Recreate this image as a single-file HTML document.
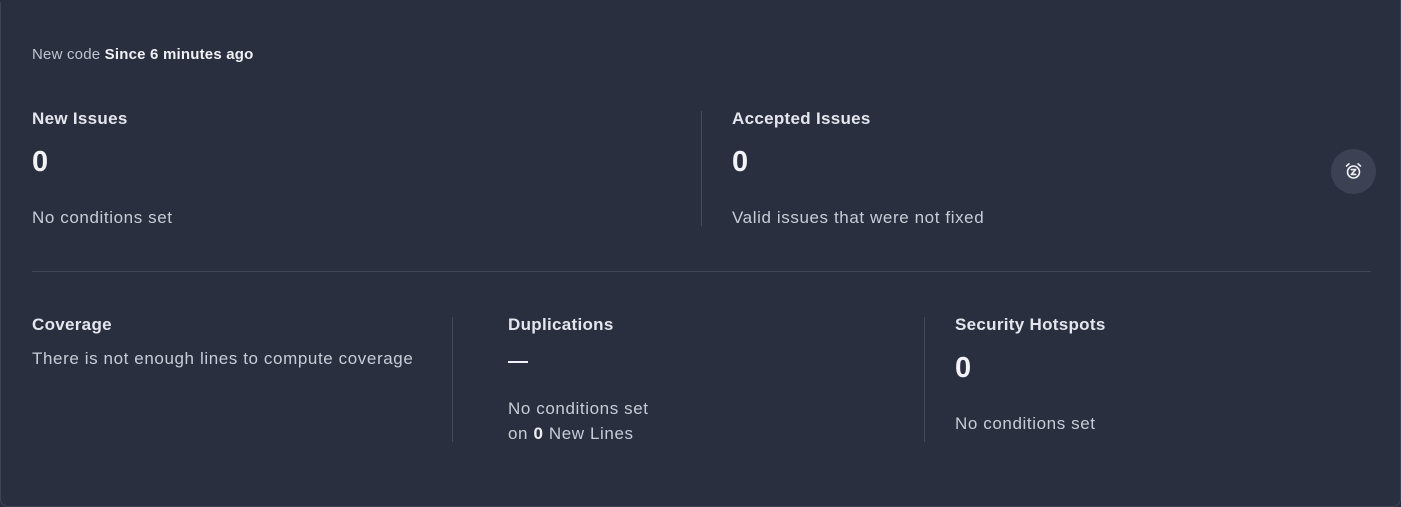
<!DOCTYPE html>
<html><head><style>
html,body{margin:0;padding:0;width:1401px;height:507px;background:#2a2f3f;overflow:hidden;font-family:"Liberation Sans",sans-serif;}
.card{position:absolute;left:0;top:-10px;width:1399px;height:515px;border:1px solid #3d4357;border-radius:8px;background:#2a2f3f;}
.tabcover{position:absolute;left:0;top:0;width:163px;height:2px;background:#2a2f3f;}
.t{position:absolute;white-space:nowrap;}
.h{font-size:17px;font-weight:bold;color:#e4e6ed;letter-spacing:0.3px;}
.n{font-size:29px;font-weight:bold;color:#f2f3f6;}
.b{font-size:17px;color:#c8ccd7;letter-spacing:0.6px;}
.vl{position:absolute;width:1px;background:#444a5d;}
</style></head><body>
<div class="card"></div>
<div class="tabcover"></div>
<div class="t" style="left:32px;top:46px;font-size:15px;letter-spacing:0.2px;color:#c0c5d1">New code <b style="color:#eef0f4">Since 6 minutes ago</b></div>

<div class="t h" style="left:32px;top:109px">New Issues</div>
<div class="t n" style="left:32px;top:146px">0</div>
<div class="t b" style="left:32px;top:208px">No conditions set</div>

<div class="vl" style="left:701px;top:111px;height:115px"></div>
<div class="t h" style="left:732px;top:109px">Accepted Issues</div>
<div class="t n" style="left:732px;top:146px">0</div>
<div class="t b" style="left:732px;top:208px">Valid issues that were not fixed</div>

<div style="position:absolute;left:1331px;top:149px;width:45px;height:45px;border-radius:50%;background:#3c4153"></div>
<svg style="position:absolute;left:1343px;top:161px" width="21" height="21" viewBox="0 0 21 21" fill="none" stroke="#eef0f4" stroke-width="1.6" stroke-linecap="round" stroke-linejoin="round">
<circle cx="10.5" cy="11" r="6"/><path d="M3.5 5 L6 2.8 M17.5 5 L15 2.8 M8.3 8.6 H12.7 L8.3 13.4 H12.7"/></svg>

<div style="position:absolute;left:32px;top:271px;width:1339px;height:1px;background:#40465a"></div>

<div class="t h" style="left:32px;top:315px">Coverage</div>
<div class="t b" style="left:32px;top:349px">There is not enough lines to compute coverage</div>

<div class="vl" style="left:452px;top:317px;height:125px"></div>
<div class="t h" style="left:508px;top:315px">Duplications</div>
<div style="position:absolute;left:508px;top:361px;width:20px;height:2px;background:#f2f3f6"></div>
<div class="t b" style="left:508px;top:399px">No conditions set</div>
<div class="t b" style="left:508px;top:424px">on <b style="color:#eef0f4;font-weight:bold">0</b> New Lines</div>

<div class="vl" style="left:924px;top:317px;height:125px"></div>
<div class="t h" style="left:955px;top:315px">Security Hotspots</div>
<div class="t n" style="left:955px;top:352px">0</div>
<div class="t b" style="left:955px;top:414px">No conditions set</div>
</body></html>
